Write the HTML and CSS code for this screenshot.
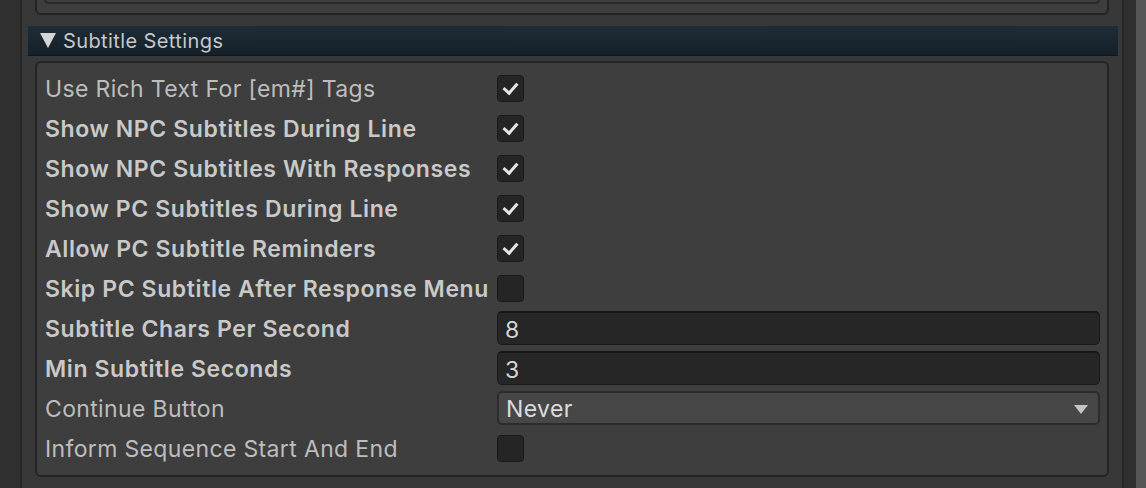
FILE: index.html
```html
<!DOCTYPE html>
<html lang="en">
<head>
  <meta charset="UTF-8">
  <title>Subtitle Settings</title>
  <link rel="stylesheet" href="styles.css">
</head>
<body>
  <div class="gutter"></div>
  <div class="inspector">
    <div class="prev-panel"><div class="prev-inner"></div></div>

    <div class="foldout">
      <span class="fold-arrow"></span>
      <span>Subtitle Settings</span>
    </div>

    <div class="panel">
      <div class="row">
        <span class="label">Use Rich Text For [em#] Tags</span>
        <span class="check on"></span>
      </div>
      <div class="row">
        <span class="label bold">Show NPC Subtitles During Line</span>
        <span class="check on"></span>
      </div>
      <div class="row">
        <span class="label bold">Show NPC Subtitles With Responses</span>
        <span class="check on"></span>
      </div>
      <div class="row">
        <span class="label bold">Show PC Subtitles During Line</span>
        <span class="check on"></span>
      </div>
      <div class="row">
        <span class="label bold">Allow PC Subtitle Reminders</span>
        <span class="check on"></span>
      </div>
      <div class="row">
        <span class="label bold">Skip PC Subtitle After Response Menu</span>
        <span class="check"></span>
      </div>
      <div class="row">
        <span class="label bold">Subtitle Chars Per Second</span>
        <span class="field">8</span>
      </div>
      <div class="row">
        <span class="label bold">Min Subtitle Seconds</span>
        <span class="field">3</span>
      </div>
      <div class="row">
        <span class="label">Continue Button</span>
        <span class="dropdown">Never<span class="drop-arrow"></span></span>
      </div>
      <div class="row">
        <span class="label">Inform Sequence Start And End</span>
        <span class="check"></span>
      </div>
    </div>
  </div>
  <div class="scroll-edge"></div>
</body>
</html>
```

FILE: styles.css
```css
body {
  margin: 0;
  height: 488px;
  display: flex;
  background: #383838;
  font-family: 'Inter', 'Noto Sans', sans-serif;
  overflow: hidden;
}

.gutter {
  width: 20px;
  background: #303030;
  border-right: 2px solid #262626;
}

.inspector {
  flex: 1;
  padding: 0 4px 0 6px;
}

.prev-panel {
  height: 13px;
  margin: 0 9px 0 7px;
  background: #3e3e3e;
  border: 2px solid #242424;
  border-top: none;
  border-radius: 0 0 6px 6px;
  padding: 0 7px;
}

.prev-inner {
  height: 2px;
  border: 2px solid #2a2a2a;
  border-top: none;
  border-radius: 0 0 5px 5px;
}

.foldout {
  margin-top: 11px;
  height: 29px;
  display: flex;
  align-items: center;
  gap: 7px;
  padding-left: 12px;
  background: linear-gradient(#1d2c36, #15212a);
  border-bottom: 1px solid #0e161b;
  color: #c8c8c8;
  font-size: 20px;
  letter-spacing: 0.4px;
}

.fold-arrow {
  width: 0;
  height: 0;
  border-left: 8px solid transparent;
  border-right: 8px solid transparent;
  border-top: 15px solid #d6d6d6;
}

.panel {
  margin: 5px 9px 0 7px;
  height: 407px;
  background: #3e3e3e;
  border: 2px solid #242424;
  border-radius: 6px;
  padding: 5px 7px 0 8px;
}

.row {
  height: 40px;
  display: flex;
  align-items: center;
}

.label {
  width: 452px;
  flex: none;
  padding-top: 2px;
  font-size: 23px;
  letter-spacing: 0.35px;
  color: #bdbdbd;
  white-space: nowrap;
}

.label.bold {
  font-weight: 600;
  letter-spacing: 0.6px;
  color: #c9c9c9;
}

.check {
  width: 25px;
  height: 25px;
  background: #252525;
  border: 1px solid #1a1a1a;
  border-radius: 4px;
  position: relative;
}

.check.on::after {
  content: "";
  position: absolute;
  left: 8px;
  top: 4px;
  width: 6px;
  height: 11px;
  border: solid #e6e6e6;
  border-width: 0 3px 3px 0;
  transform: rotate(42deg);
}

.field,
.dropdown {
  flex: 1;
  box-sizing: border-box;
  display: flex;
  align-items: center;
  padding-left: 7px;
  padding-top: 2px;
  border-radius: 5px;
  font-size: 23px;
  letter-spacing: 0.4px;
  color: #d6d6d6;
}

.field {
  height: 34px;
  background: #262626;
  border: 1px solid #1a1a1a;
  border-top: 2px solid #171717;
}

.dropdown {
  height: 34px;
  background: #474747;
  border: 2px solid #2c2c2c;
  justify-content: space-between;
  padding-right: 10px;
  color: #dcdcdc;
}

.drop-arrow {
  width: 0;
  height: 0;
  border-left: 7px solid transparent;
  border-right: 7px solid transparent;
  border-top: 9px solid #c4c4c4;
}

.scroll-edge {
  width: 12px;
  background: #303030;
  border-left: 2px solid #262626;
  border-right: 10px solid #565656;
}
```
